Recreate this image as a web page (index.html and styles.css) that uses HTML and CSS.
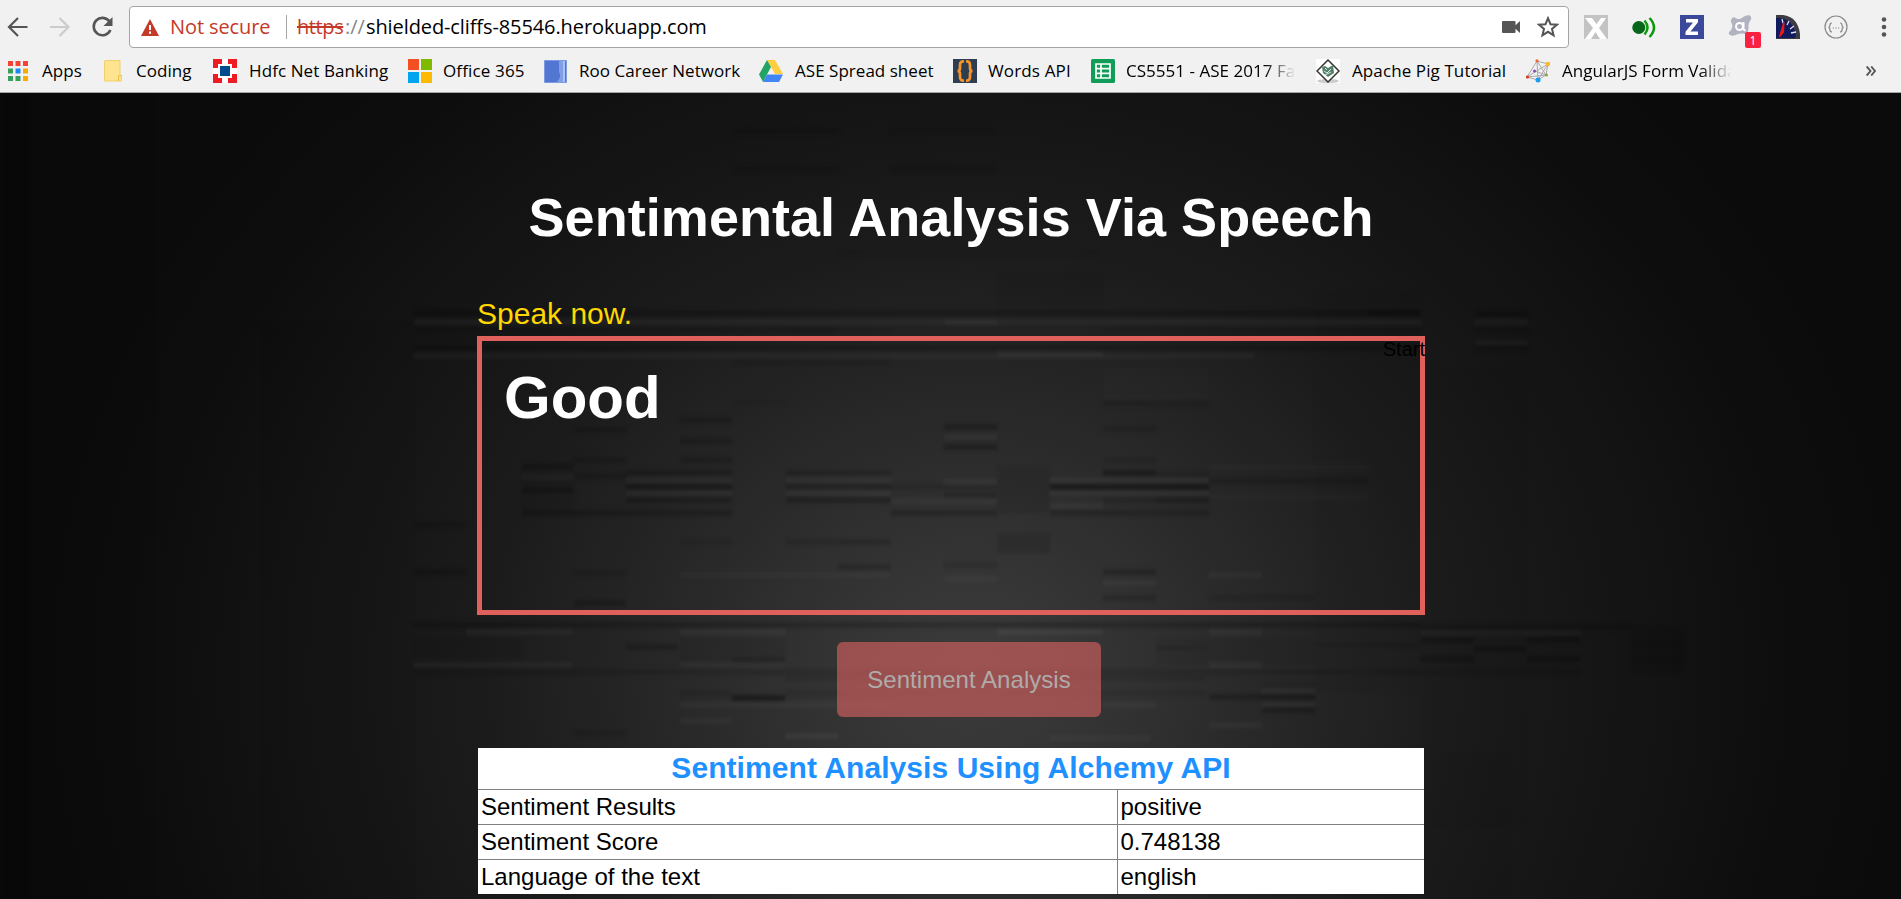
FILE: index.html
```html
<!DOCTYPE html>
<html lang="en">
<head>
<meta charset="utf-8">
<title>Sentimental Analysis Via Speech</title>
<link rel="stylesheet" href="styles.css">
</head>
<body>
<header class="chrome">
  <div class="toolbar">
    <svg class="nav" width="112" height="24" viewBox="0 0 112 24" fill="none" stroke-width="2.2">
      <path d="M20.500 12H2.500M11 3L2 12l9 9" stroke="#555"/>
      <path d="M43 12h18M52.500 3l9 9-9 9" stroke="#ccc"/>
      <path d="M102.500 6.500A8.700 8.700 0 1 0 103.400 15" stroke="#555" stroke-width="2.600"/>
      <path d="M105.500 2v9h-9z" fill="#555"/>
    </svg>
    <div class="omnibox">
      <svg class="warn" width="18" height="17" viewBox="0 0 18 17"><path d="M9 0l9 17H0z" fill="#c53929"/><path d="M9 6v5M9 12.500v2.200" stroke="#fff" stroke-width="2"/></svg>
      <span class="insecure">Not secure</span>
      <span class="divider"></span>
      <span class="url"><s class="https">https</s><span class="slashes">://</span><span class="host">shielded-cliffs-85546.herokuapp.com</span></span>
      <svg class="camera" width="18" height="12" viewBox="0 0 18 12"><path d="M1 0h11.500q1 0 1 1v3.200L18 0v12l-4.500-4.200V11q0 1-1 1H1q-1 0-1-1V1q0-1 1-1z" fill="#555"/></svg>
      <svg class="star" width="22" height="22" viewBox="0 0 22 22"><path d="M11 2.200l2.500 6 6.500.5-5 4.200 1.600 6.400-5.600-3.500-5.600 3.500L7 12.900 2 8.700l6.500-.5z" fill="none" stroke="#555" stroke-width="2"/></svg>
    </div>
    <div class="extensions">
      <svg width="24" height="24" viewBox="0 0 24 24"><path d="M0 0h24v24H0z" fill="#c3c3c3"/><path d="M1 3h7l4.500 6L17 3h5l-7 10 8 11h-7l-4.500-7L7 24H1l8-11z" fill="#fff"/></svg>
      <svg width="24" height="24" viewBox="0 0 24 24" fill="none" stroke="#0a9a0a" stroke-width="2.500"><circle cx="6.800" cy="12.500" r="6.500" fill="#06661a" stroke="none"/><path d="M12.500 5.500q6 7 0 14M17.500 3q9 9.500 0 19"/></svg>
      <svg width="24" height="24" viewBox="0 0 24 24"><path d="M0 0h24v24H0z" fill="#3c4899"/><path d="M6 4h12v3.200l-7.500 9.300H18V20H5.500v-3.200L13 7.500H6z" fill="#fff"/></svg>
      <span class="avast">
        <svg width="24" height="24" viewBox="0 0 24 24"><path d="M6 2q3 3 7 1.500Q17 0 21 0q4 2 1 6-2 3-1.500 6 .5 5-2.500 7-4-1-8 0-5 3-8 1-3-2 1-5 2-3 1-6Q1 4 6 2z" fill="#b1b3c0"/><circle cx="11.500" cy="11.500" r="3.500" fill="none" stroke="#fff" stroke-width="2"/><path d="M15.500 7v7q.5 1.500 2 1" fill="none" stroke="#fff" stroke-width="2"/></svg>
        <b class="badge">1</b>
      </span>
      <svg width="24" height="24" viewBox="0 0 24 24"><path d="M0 0h7Q22 2 24 19v5H0z" fill="#3c3c42"/><path d="M0 3q16-1 20 17l-1 3H0z" fill="#101a5c"/><path d="M6 4l1 4M13 6l-2 4M18 11l-4 3M20 17l-5 1" stroke="#dce0f5" stroke-width="1.300"/><path d="M8 7L3.500 22l4-5z" fill="#f01818" stroke="#f01818" stroke-width="1.200"/></svg>
      <svg width="24" height="24" viewBox="0 0 24 24" fill="none" stroke="#888" stroke-width="1.200"><circle cx="12" cy="12" r="11"/><path d="M8 8q-2 0-2 2 0 2-1.500 2.300Q6 12.500 6 15q0 2 2 2M16 8q2 0 2 2 0 2 1.500 2.300Q18 12.500 18 15q0 2-2 2M8.800 13h1.200M11.400 13h1.200M14 13h1.200"/></svg>
      <svg class="menu" width="6" height="20" viewBox="0 0 6 20" fill="#555"><circle cx="3" cy="2.500" r="2.300"/><circle cx="3" cy="10" r="2.300"/><circle cx="3" cy="17.500" r="2.300"/></svg>
    </div>
  </div>
  <nav class="bookmarks">
    <a class="bm apps"><svg width="20" height="20" viewBox="0 0 20 20"><path d="M0 0h5v5H0zM7.500 0h5v5h-5zM15 0h5v5h-5z" fill="#f44336"/><path d="M0 7.500h5v5H0zM0 15h5v5H0zM7.500 15h5v5h-5z" fill="#34a05c"/><path d="M7.500 7.500h5v5h-5z" fill="#1e88f5"/><path d="M15 7.500h5v5h-5zM15 15h5v5h-5z" fill="#fbab00"/></svg><span>Apps</span></a>
    <a class="bm coding"><svg width="18" height="22" viewBox="0 0 18 22"><path d="M1 .5h15v15h1.500v5.500H.5V1z" fill="#ffe48f" stroke="#f0d068"/><path d="M14.500 21v-5.500h3" fill="none" stroke="#e9bf45"/></svg><span>Coding</span></a>
    <a class="bm hdfc"><svg width="24" height="24" viewBox="0 0 24 24"><path d="M0 0h24v24H0z" fill="#ed1c24"/><path d="M5 5h14v14H5zM9 0h6v24H9zM0 9h24v6H0z" fill="#fff"/><path d="M7 7h10v10H7z" fill="#004c8f"/></svg><span>Hdfc Net Banking</span></a>
    <a class="bm office"><svg width="24" height="24" viewBox="0 0 24 24"><path d="M0 0h11v11H0z" fill="#f25022"/><path d="M13 0h11v11H13z" fill="#7fba00"/><path d="M0 13h11v11H0z" fill="#00a4ef"/><path d="M13 13h11v11H13z" fill="#ffb900"/></svg><span>Office 365</span></a>
    <a class="bm roo"><svg width="23" height="23" viewBox="0 0 23 23"><path d="M.5.500h22v22H.5z" fill="#5277d2" stroke="#7d9be0"/><path d="M15 1h5v21h-7q5-6 2-10z" fill="#7f9fe6"/><path d="M19 1h2v21h-2z" fill="#a9c1f2"/></svg><span>Roo Career Network</span></a>
    <a class="bm ase"><svg width="24" height="22" viewBox="0 0 24 22"><path d="M8 0h8l8 14h-8z" fill="#ffcd40"/><path d="M8 0l4 7L4 22 0 14.500z" fill="#21a464"/><path d="M8 14.500h16L20 22H4z" fill="#4285f4"/></svg><span>ASE Spread sheet</span></a>
    <a class="bm words"><svg width="24" height="24" viewBox="0 0 24 24"><path d="M0 0h24v24H0z" fill="#2c3e50"/><path d="M11 2.500Q7 2 7 6v3q0 3-2.500 3Q7 12 7 15v3q0 4 4 3.500M13 2.500q4-.5 4 3.500v3q0 3 2.500 3Q17 12 17 15v3q0 4-4 3.500" fill="none" stroke="#f7942a" stroke-width="2.700"/></svg><span>Words API</span></a>
    <a class="bm sheet"><svg width="24" height="24" viewBox="0 0 24 24"><rect width="24" height="24" rx="1.500" fill="#0f9d58"/><path d="M5 5h14v14H5zM5 9.700h14M5 14.300h14M10 5v14" fill="none" stroke="#fff" stroke-width="1.700"/></svg><span class="fade">CS5551 - ASE 2017 Fa</span></a>
    <a class="bm pig"><svg width="24" height="24" viewBox="0 0 24 24"><path d="M0 0h24v24H0z" fill="#fff"/><ellipse cx="12" cy="22" rx="11" ry="2" fill="#ccc"/><path d="M12 1l11 11-11 11L1 12z" fill="#fff" stroke="#333" stroke-width="1.500"/><path d="M6 8l3-1 3 2 5-3 1 8-6 4-5-4z" fill="#55806a"/><path d="M8 12l3 2 4-4M9 9l2 2M9 16l6-3" stroke="#dce8e0" fill="none"/></svg><span>Apache Pig Tutorial</span></a>
    <a class="bm angular"><svg width="24" height="24" viewBox="0 0 24 24"><path d="M11 2L1 18l11 3 8-5 2-11zM11 2l1 19M11 2l9 14M1 18L22 5M1 18l19-2M12 21L22 5M9 12l11 4" fill="none" stroke="#aaa" stroke-width="1"/><circle cx="11" cy="1.800" r="1.600" fill="#f2672a"/><circle cx="22" cy="5" r="2.300" fill="#fbb92d"/><circle cx="1.500" cy="18" r="1.600" fill="#d83a2b"/><circle cx="12" cy="21" r="2.500" fill="#1a9cf0"/><circle cx="20.500" cy="16" r="1.500" fill="#8aa63c"/><circle cx="8.500" cy="12" r="1.500" fill="#8b47ba"/></svg><span class="fade">AngularJS Form Valida</span></a>
    <svg class="more" width="10" height="10" viewBox="0 0 10 10"><path d="M.7.500L4.500 5 .7 9.500M5.200.500L9 5 5.200 9.500" fill="none" stroke="#555" stroke-width="1.900"/></svg>
  </nav>
</header>
<main class="page">
  <svg class="texture" viewBox="0 0 1901 806" id="texture"></svg>
  <section class="content">
    <h1 class="title">Sentimental Analysis Via Speech</h1>
    <p class="status">Speak now.</p>
    <div class="transcript"><span class="spoken">Good</span><span class="start">Start</span></div>
    <button class="analyse" disabled>Sentiment Analysis</button>
    <table class="results">
      <tr><th colspan="2">Sentiment Analysis Using Alchemy API</th></tr>
      <tr><td class="label">Sentiment Results</td><td>positive</td></tr>
      <tr><td class="label">Sentiment Score</td><td>0.748138</td></tr>
      <tr><td class="label">Language of the text</td><td>english</td></tr>
    </table>
  </section>
</main>
<script src="texture.js"></script>
</body>
</html>
```
FILE: styles.css
```css
* { box-sizing: border-box; }
body { margin: 0; width: 1901px; height: 899px; overflow: hidden; font-family: "Liberation Sans", Arial, sans-serif; background: #0b0b0b; }
svg { display: block; flex: none; }

.chrome { height: 93px; background: #f1f1f1; border-bottom: 1px solid #a5a5a5; font-family: "Open Sans", "Noto Sans", sans-serif; }
.toolbar { display: flex; align-items: flex-start; height: 48px; padding: 6px 13px 0 7px; }
.nav { margin-top: 9px; }
.omnibox { display: flex; align-items: center; width: 1440px; height: 42px; margin-left: 10px; padding: 0 9px 0 11px; background: #fff; border: 1px solid #a5a5a5; border-radius: 4px; font-size: 20px; line-height: 40px; white-space: nowrap; }
.insecure { width: 116px; margin-left: 11px; color: #c53929; letter-spacing: -0.1px; }
.divider { width: 1px; height: 24px; margin-right: 10px; background: #a5a5a5; }
.url { flex: 1; display: flex; color: #000; }
.https { width: 48px; color: #c53929; letter-spacing: -0.4px; }
.slashes { width: 21px; color: #888; }
.host { letter-spacing: -0.1px; }
.star { margin-left: 17px; }
.extensions { display: flex; gap: 24px; margin: 9px 0 0 15px; }
.extensions .menu { margin: 2px 0 0 9px; }
.avast { position: relative; width: 24px; height: 24px; }
.badge { position: absolute; left: 17px; top: 17px; width: 16px; height: 16px; border-radius: 2px; background: #f8223f; color: #fff; font-size: 12px; font-weight: 400; line-height: 17px; text-align: center; }

.bookmarks { display: flex; align-items: center; height: 44px; padding: 2px 25px 0 8px; font-size: 17px; color: #000; white-space: nowrap; }
.bm { display: flex; align-items: center; height: 30px; }
.bm span { margin: -2px 0 0 -1px; letter-spacing: 0.03px; }
.apps { width: 96px; gap: 15px; }
.coding { width: 109px; gap: 15px; }
.hdfc { width: 195px; gap: 13px; }
.hdfc span { letter-spacing: 0.1px; }
.office { width: 136px; gap: 12px; }
.office span { letter-spacing: 0.15px; }
.roo { width: 215px; gap: 13px; }
.ase { width: 194px; gap: 13px; }
.words { width: 138px; gap: 12px; }
.words span { letter-spacing: 0.15px; }
.sheet { width: 225px; gap: 12px; }
.pig { width: 210px; gap: 13px; }
.pig span { letter-spacing: 0.1px; }
.angular { width: 340px; gap: 13px; }
.fade { width: 173px; -webkit-mask-image: linear-gradient(90deg, #000 80%, transparent 98%); mask-image: linear-gradient(90deg, #000 80%, transparent 98%); }

.page { position: relative; height: 806px; overflow: hidden; background: radial-gradient(ellipse 930px 830px at 51% 72%, #3c3c3c 0%, #323232 17%, #262626 35%, #1b1b1b 53%, #131313 74%, #0d0d0d 90%, #0b0b0b 100%); }
.texture { position: absolute; left: 0; top: 0; width: 1901px; height: 806px; filter: blur(1.5px); }
.content { position: relative; display: flex; flex-direction: column; width: 948px; margin-left: 477px; padding-top: 93px; }
.title { margin: 0; font-size: 54px; line-height: 62px; letter-spacing: 0.05px; text-align: center; color: #fff; white-space: nowrap; }
.status { margin: 48px 0 0; font-size: 30px; line-height: 36px; color: #ffd700; }
.transcript { display: flex; justify-content: space-between; align-items: flex-start; height: 279px; margin-top: 4px; border: 5px solid #e0605c; }
.spoken { margin: 23px 0 0 22px; font-size: 60px; line-height: 68px; font-weight: 700; color: #fff; }
.start { margin-right: -5px; font-size: 20px; line-height: 16px; color: #000; }
.analyse { width: 264px; height: 75px; margin: 27px 0 0 360px; border: 0; border-radius: 6px; background: rgba(217, 98, 95, .62); color: #b0abab; font: 24px "Liberation Sans", Arial, sans-serif; letter-spacing: 0.04px; }
.results { width: 946px; margin: 31px 0 0 1px; border-collapse: collapse; border-style: hidden; background: #fff; font-size: 24px; color: #000; }
.results td, .results th { border: 1px solid #808080; padding: 0 3px; }
.results td { height: 35px; line-height: 34px; }
.results th { height: 41px; font-size: 30px; line-height: 40px; letter-spacing: 0.07px; color: #1e90ff; }
.label { width: 639px; }
```
FILE: texture.js
```js
// Soft horizontal streaks of the page backdrop: [x, y, width, light level]
const streaks = [
  [414,220,1007,-.25],[1368,220,53,-.25],[414,229,1007,.05],[414,237,420,-.15],[1103,237,318,-.1],
  [414,255,1007,-.25],[414,263,840,.04],[997,261,106,.05],
  [1475,221,53,-.25],[1475,229,53,.04],[1475,237,53,-.15],[1475,250,53,.04],[1475,255,53,-.2],
  [785,237,106,-.1],[945,229,52,.04],[733,269,157,-.12],[733,310,53,-.08],
  [574,337,52,-.2],[574,367,52,-.2],[680,327,52,-.2],[680,348,52,-.2],[680,367,52,-.2],
  [944,334,53,-.3],[944,344,53,.05],[944,354,53,-.3],[1103,310,106,-.15],[1103,336,53,-.15],[1103,367,53,-.12],
  [522,373,52,-.25],[522,384,52,.03],[522,397,52,-.3],[522,420,210,-.25],[574,383,52,-.2],
  [626,380,106,-.25],[626,387,106,.04],[626,394,106,-.35],[626,400,106,.05],[626,407,106,-.25],
  [786,380,105,-.2],[786,387,105,.04],[786,394,105,-.25],[786,400,105,.05],[786,407,105,-.3],
  [891,394,106,-.15],[891,408,106,.04],[944,389,53,.05],[944,402,53,-.2],[891,420,106,-.25],
  [1050,387,159,.05],[1050,394,159,-.5],[1050,400,159,.05],[1050,413,53,.05],[1050,420,159,-.22],
  [1103,380,53,-.4],[1156,381,53,-.15],[1156,407,53,-.3],[1103,407,53,-.15],
  [1209,388,159,-.2],[1209,374,159,.02],[1209,404,159,.02],
  [414,432,52,-.15],[414,479,52,-.25],[574,480,52,-.15],[574,510,52,-.25],[680,449,52,-.1],
  [786,449,52,-.15],[838,449,53,-.2],[838,474,53,-.2],[944,472,53,-.15],[944,486,53,.04],
  [680,482,210,.03],[1103,479,53,-.25],[1103,490,53,.05],[1103,505,53,-.2],[1209,482,53,.04],[1209,505,106,-.12],
  [414,532,1007,-.25],[466,539,106,.05],[680,539,106,.05],[997,539,106,.06],[1209,539,53,.05],
  [626,554,52,-.25],[732,567,53,-.2],[414,572,158,.05],[680,572,105,.05],[1209,572,53,.05],[414,579,1007,-.15],
  [1315,552,105,-.12],[1156,555,53,-.1],
  [1421,534,210,-.2],[1421,540,160,.03],[1421,547,53,-.3],[1474,556,53,-.3],[1527,547,53,-.3],[1421,566,53,-.3],
  [1527,566,53,-.3],[1421,579,160,-.15],[1632,550,53,-.1],[1632,567,53,-.1],
  [732,605,53,-.5],[680,600,52,-.12],[785,585,420,-.12],[680,612,210,.04],[785,600,420,-.1],
  [1209,604,53,-.3],[1209,632,53,.05],[1262,592,53,-.1],[1262,598,53,.04],[1262,604,53,-.35],[1262,612,53,.05],
  [1262,617,53,-.3],[1103,612,53,.05],[574,640,52,-.15],[785,643,53,.06],[1050,645,100,.04],[680,628,52,.04],
  [734,38,105,-.15],[890,38,105,-.12],[734,76,105,-.15],[890,76,105,-.15],[838,160,260,-.08]
];
// Broad faint tiles: [x, y, width, height, light level]
const tiles = [
  [0,0,32,806,-.2],[32,0,120,806,-.06],[262,230,152,576,-.04],[997,373,53,47,-.07],
  [1103,275,106,35,.01],[997,440,53,20,-.1],[1315,200,106,400,-.03],[1421,275,105,460,-.03],
  [522,373,52,50,-.05],[680,545,105,30,-.06],[1156,545,159,26,-.05],[414,545,107,20,-.06],
  [997,180,106,40,-.05],[1209,660,300,146,-.03],[1632,533,53,46,-.08]
];
const svg = document.getElementById("texture");
const add = (x, y, w, h, v) => {
  const r = document.createElementNS("http://www.w3.org/2000/svg", "rect");
  const attrs = { x, y, width: w, height: h, fill: v < 0 ? "#000" : "#fff", opacity: Math.abs(v) };
  for (const k in attrs) r.setAttribute(k, attrs[k]);
  svg.append(r);
};
tiles.forEach(t => add(...t));
streaks.forEach(([x, y, w, v]) => {
  add(x, y - 4, w, 8, v * .35);
  add(x, y - 2, w, 4, v * .5);
});
```
